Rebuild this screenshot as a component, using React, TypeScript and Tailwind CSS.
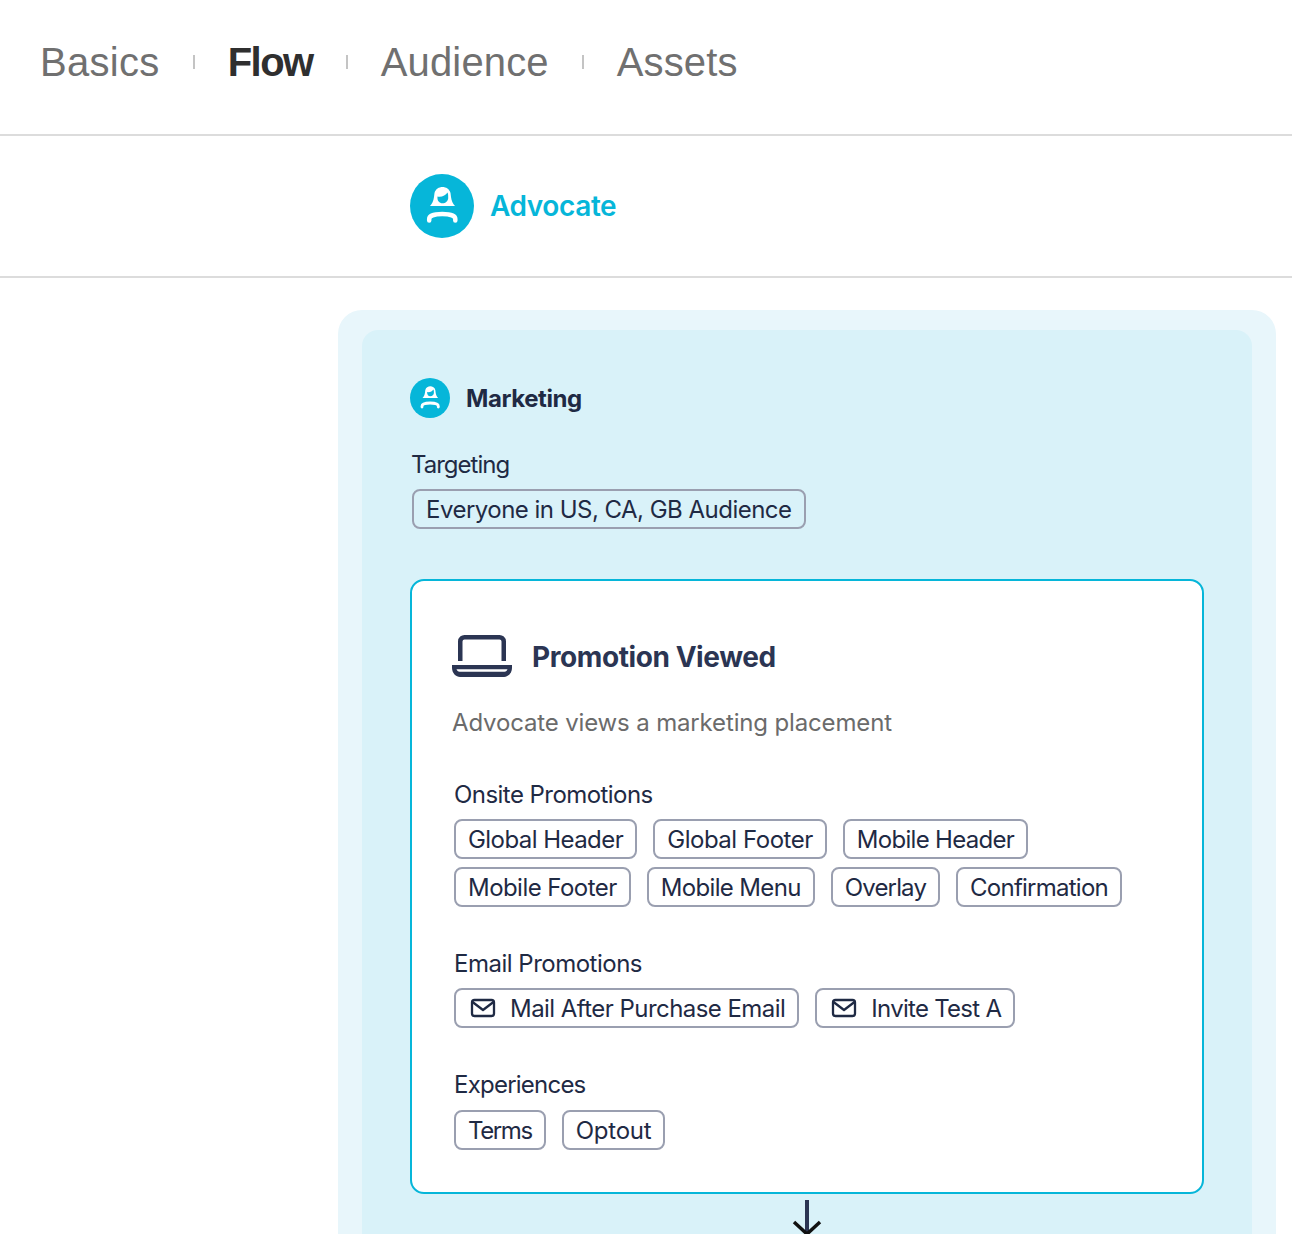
import React from "react";

const PersonIcon = ({ size }: { size: number }) => (
  <svg width={size} height={size} viewBox="0 0 64 64" className="block shrink-0">
    <circle cx="32" cy="32" r="32" fill="#06b6d9" />
    <path d="M20 32 C22 30 23.5 27 24 23 L24.5 19 C25.5 15 29 13 32.5 13 C36 13 39.5 15 40.5 19 L41 23 C41.5 27 43 30 45 32 Z" fill="#fff" />
    <path d="M27.5 22.5 C31.5 23.5 35.5 21.5 37.5 18.5 C38.3 20 38.2 22 38.2 24 C38.2 27 35.5 29.3 32.5 29.3 C29.5 29.3 27 27 27.5 22.5 Z" fill="#06b6d9" />
    <path d="M19.2 46.5 V45 C19.2 42 24 40 32.2 40 C40.5 40 45.3 42 45.3 45 V46.5" fill="none" stroke="#fff" strokeWidth="4.5" strokeLinecap="round" />
  </svg>
);

const Chip = ({
  children,
  tracking = "tracking-[-0.55px]",
  fill = "bg-white",
}: {
  children: React.ReactNode;
  tracking?: string;
  fill?: string;
}) => (
  <span className={`inline-flex h-10 items-center rounded-lg border-2 border-[#9a9fb0] px-3 pt-[2px] text-[24px] leading-none text-[#1f2a44] [font-kerning:normal] ${tracking} ${fill}`}>
    {children}
  </span>
);

const MailIcon = () => (
  <svg width="28" height="20" viewBox="0 0 28 20" fill="none" stroke="#1f2a44" strokeWidth="2.3" strokeLinejoin="round" className="relative -top-px mr-[14px] shrink-0">
    <rect x="4" y="2" width="22" height="16" rx="2.5" />
    <path d="M4.5 4 L15 12 L25.5 4" />
  </svg>
);

const Sep = () => <span className="mx-[33px] h-[14px] w-[2px] bg-[#c4c4c4]" />;

const labelClass = "text-[24px] leading-8 text-[#1f2a44] [font-kerning:normal]";

export default function App() {
  return (
    <div className="h-[1234px] overflow-hidden bg-white font-['Inter',sans-serif]">
      <nav className="flex h-[136px] items-start border-b-2 border-[#dcdcdc] pl-[40px] pt-[39px] font-['Liberation_Sans',sans-serif] text-[40px] leading-[46px] tracking-[0.15px] text-[#707070]">
        <span className="tracking-[0.3px]">Basics</span>
        <span className="flex h-[46px] items-center"><Sep /></span>
        <span className="font-bold tracking-[-1.5px] text-[#2f2f2f]">Flow</span>
        <span className="flex h-[46px] items-center"><Sep /></span>
        <span>Audience</span>
        <span className="flex h-[46px] items-center"><Sep /></span>
        <span>Assets</span>
      </nav>

      <div className="flex h-[142px] items-center gap-4 border-b-2 border-[#dcdcdc] pl-[410px]">
        <PersonIcon size={64} />
        <span className="text-[28px] font-semibold tracking-[-0.4px] text-[#06b6d9]">Advocate</span>
      </div>

      <div className="ml-[338px] mr-4 mt-8 rounded-t-[24px] bg-[#e8f6fb] px-6 pt-5">
        <div className="h-[904px] rounded-t-[16px] bg-[#d9f2f9] px-12 pt-12">
          <div className="flex items-center gap-4">
            <PersonIcon size={40} />
            <span className="relative top-[1px] text-[24px] font-bold leading-10 tracking-[-0.42px] text-[#1f2a44]">Marketing</span>
          </div>
          <div className={`ml-[1px] mt-[31px] tracking-[-1px] ${labelClass}`}>Targeting</div>
          <div className="ml-[2px] mt-[8px] flex">
            <Chip tracking="tracking-[-0.52px]" fill="bg-transparent">Everyone in US, CA, GB Audience</Chip>
          </div>

          <div className="mt-[50px] h-[615px] rounded-[14px] border-2 border-[#06b6d9] bg-white pl-[40px] pt-[53px]">
            <div className="flex items-center gap-5">
              <svg width="60" height="44" viewBox="0 0 60 44" className="shrink-0">
                <path d="M8.25 27 V7.5 C8.25 4.5 10.5 3.25 12.5 3.25 H47.5 C49.5 3.25 51.75 4.5 51.75 7.5 V27" fill="none" stroke="#2b3553" strokeWidth="4.5" />
                <path d="M0 31 H60 V34 C60 39 56 43 52 43 H8 C4 43 0 39 0 34 Z" fill="#2b3553" />
                <path d="M4.5 35.3 H55.5 C55 36.8 54 37.8 52.5 37.8 H7.5 C6 37.8 5 36.8 4.5 35.3 Z" fill="#fff" />
              </svg>
              <span className="relative top-[1px] text-[28px] font-bold tracking-[-0.42px] text-[#2b3553]">Promotion Viewed</span>
            </div>
            <p className="mt-[29px] text-[24px] leading-8 tracking-[-0.15px] text-[#6b6b6b]">Advocate views a marketing placement</p>

            <div className="ml-[2px]">
              <div className={`mt-[40px] tracking-[-0.55px] ${labelClass}`}>Onsite Promotions</div>
              <div className="mt-[8px] flex flex-wrap gap-x-4 gap-y-2">
                <Chip>Global Header</Chip>
                <Chip tracking="tracking-[-0.47px]">Global Footer</Chip>
                <Chip tracking="tracking-[-0.7px]">Mobile Header</Chip>
              </div>
              <div className="mt-2 flex flex-wrap gap-x-4 gap-y-2">
                <Chip>Mobile Footer</Chip>
                <Chip tracking="tracking-[-0.64px]">Mobile Menu</Chip>
                <Chip tracking="tracking-[-0.85px]">Overlay</Chip>
                <Chip tracking="tracking-[-0.75px]">Confirmation</Chip>
              </div>

              <div className={`mt-[41px] tracking-[-0.5px] ${labelClass}`}>Email Promotions</div>
              <div className="mt-[8px] flex gap-4">
                <Chip><MailIcon />Mail After Purchase Email</Chip>
                <Chip tracking="tracking-[-0.72px]"><MailIcon />Invite Test A</Chip>
              </div>

              <div className={`mt-[41px] tracking-[-0.77px] ${labelClass}`}>Experiences</div>
              <div className="mt-[9px] flex gap-4">
                <Chip tracking="tracking-[-1.4px]">Terms</Chip>
                <Chip tracking="tracking-[-0.25px]">Optout</Chip>
              </div>
            </div>
          </div>

          <div className="mt-[6px] flex justify-center">
            <svg width="32" height="36" viewBox="0 0 32 36" fill="none">
              <path d="M16 0 V32" stroke="#2b3553" strokeWidth="4" />
              <path d="M3 22 L16 34 L29 22" stroke="#111" strokeWidth="3.5" />
            </svg>
          </div>
        </div>
      </div>
    </div>
  );
}
